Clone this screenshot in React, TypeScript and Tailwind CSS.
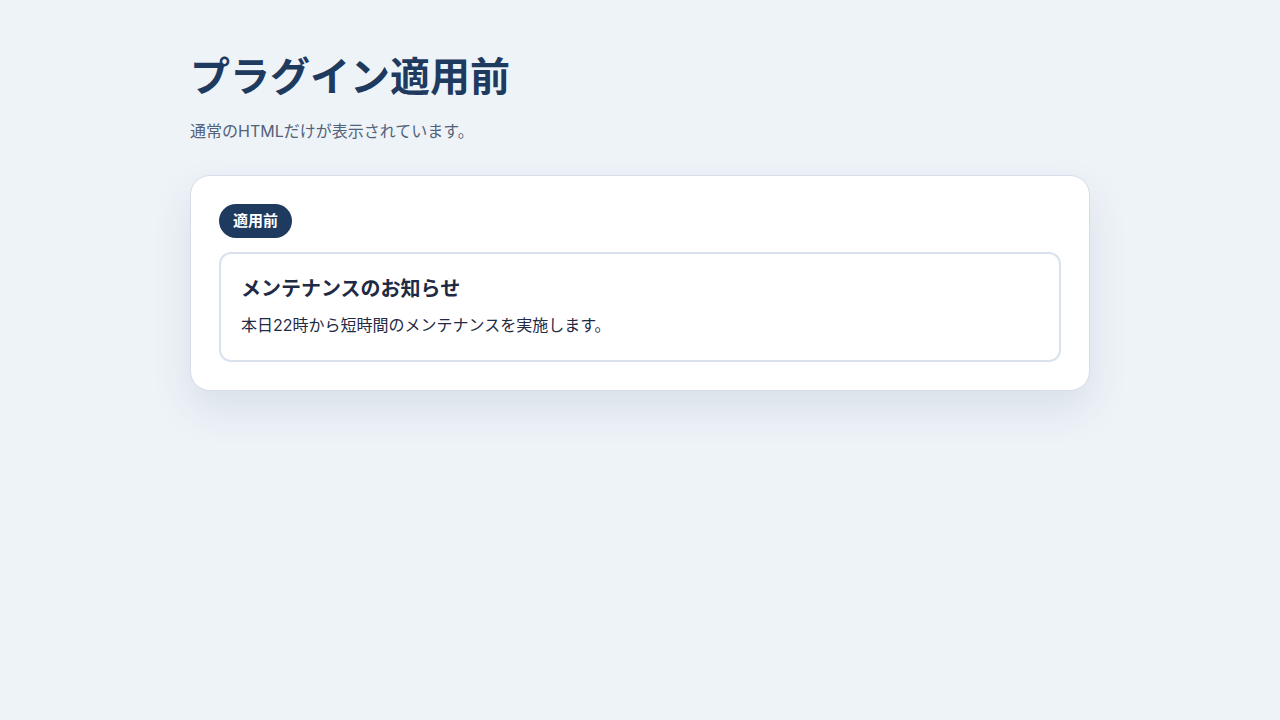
export default function App() {
  return (
    <div
      className="min-h-screen bg-[#eef3f8] px-4"
      style={{ fontFamily: 'Inter, "Noto Sans CJK JP", sans-serif' }}
    >
      <div className="mx-auto w-full max-w-[900px] pt-[53px]">
        <h1 className="text-[40px] leading-[48px] font-bold text-[#1e3a5f]">
          プラグイン適用前
        </h1>
        <p className="mt-[17px] text-base leading-[26px] text-[#52627a]">
          通常のHTMLだけが表示されています。
        </p>

        <div className="mt-[31px] rounded-[20px] border border-[#d5dde9] bg-white p-7 shadow-[0_18px_40px_rgba(30,58,95,0.10)]">
          <span className="inline-flex h-[34px] items-center rounded-full bg-[#1e3a5f] px-[14px] text-[15px] font-bold text-white">
            適用前
          </span>

          <div className="mt-[14px] rounded-xl border-2 border-[#d9e2ec] px-5 pt-[21px] pb-[22px]">
            <h2 className="text-[20px] leading-7 font-bold text-[#1f2a44]">
              メンテナンスのお知らせ
            </h2>
            <p className="mt-[9px] text-base leading-[26px] text-[#1f2a44]">
              本日22時から短時間のメンテナンスを実施します。
            </p>
          </div>
        </div>
      </div>
    </div>
  )
}
